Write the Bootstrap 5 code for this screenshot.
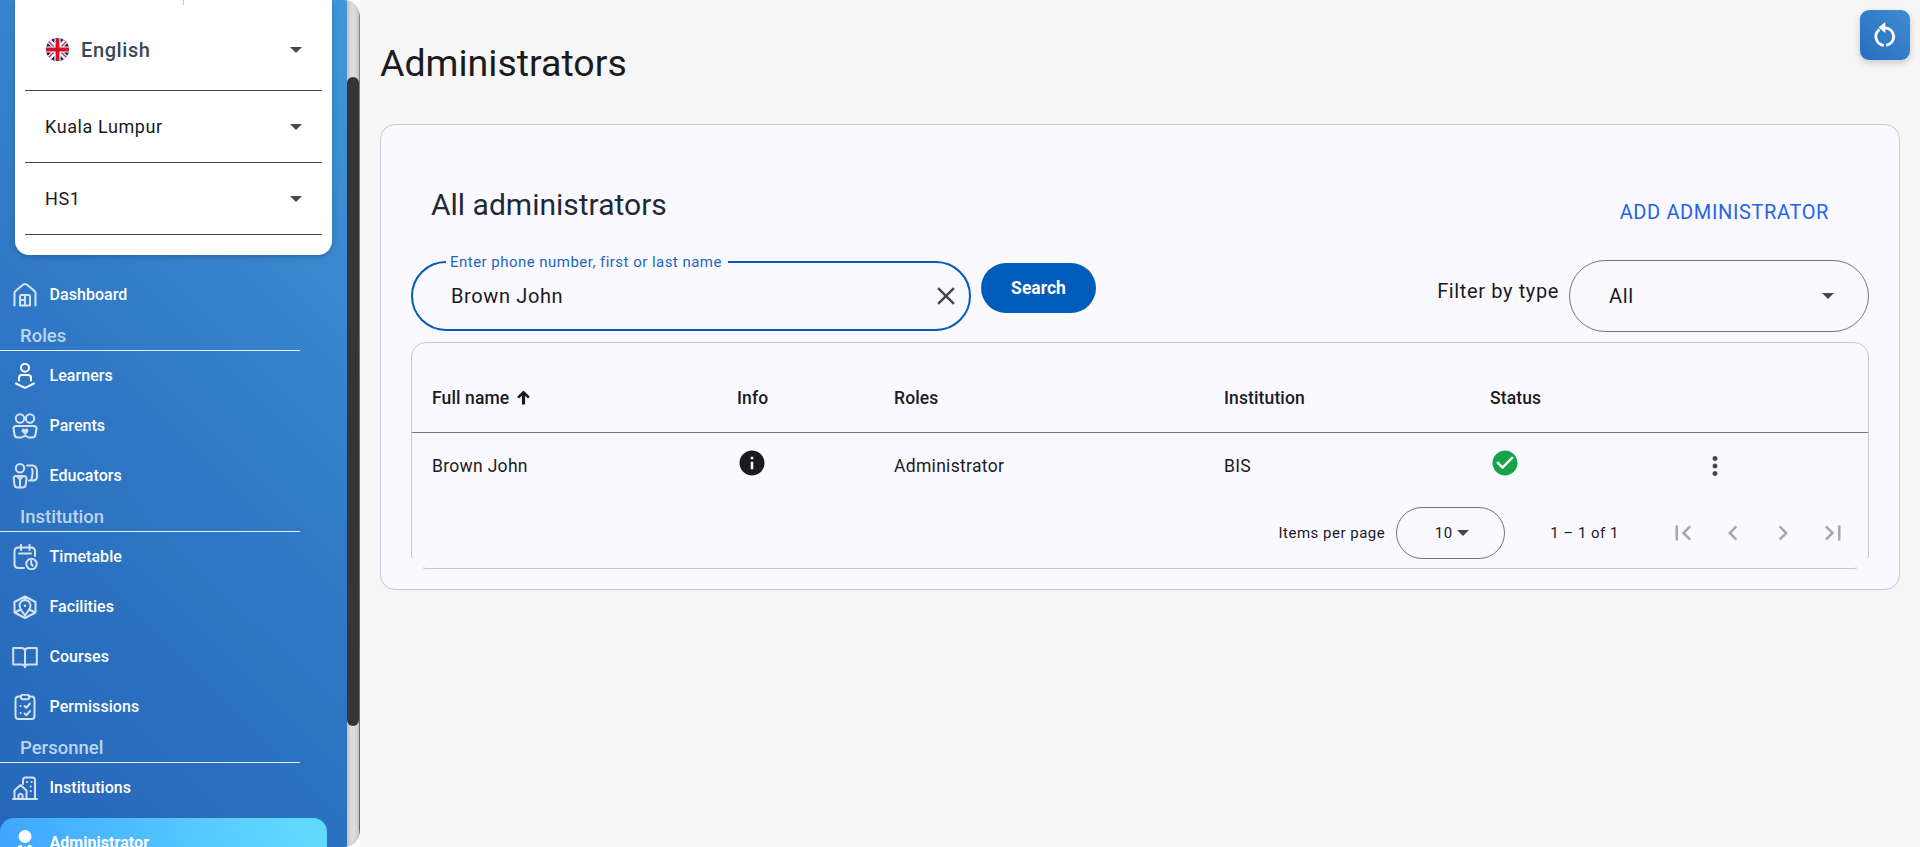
<!DOCTYPE html>
<html lang="en">
<head>
<meta charset="utf-8">
<meta name="viewport" content="width=device-width, initial-scale=1">
<title>Administrators</title>
<link rel="stylesheet" href="https://cdn.jsdelivr.net/npm/bootstrap@5.3.0/dist/css/bootstrap.min.css">
<style>
  body { font-family: Roboto, "Liberation Sans", sans-serif; background: #f6f6f6; color: #1a1b1f; height: 847px; line-height: 1.4; }
  svg { display: block; flex: none; }

  /* Sidebar */
  .side-wrap { width: 360px; height: 847px; background: #fdfbff; }
  .side { width: 360px; height: 847px; border-radius: 0 17px 17px 0; background: linear-gradient(45deg, #2566b8, #3079c7 50%, #4197d8); color: #fff; }
  .side-main { width: 347px; }
  .side-track { width: 12px; padding-top: 77px; background: linear-gradient(90deg, #c0c0c0, #dcdcdc 35%, #dcdcdc 65%, #c4c4c4); }
  .side-thumb { height: 649px; border-radius: 6px; background: #353535; }
  .picker { width: 317px; height: 255px; margin-left: 15px; padding: 0 10px; background: #fff; border-radius: 0 0 14px 14px; box-shadow: 0 2px 6px rgba(0,0,0,.2); color: #1a1b1f; }
  .picker-stub { width: 1px; height: 5px; margin-left: 158px; background: #c4c6d0; }
  .picker-row { height: 72px; padding: 0 20px; border-bottom: 1px solid #44474e; font-size: 18px; letter-spacing: .6px; }
  .picker-row.lang { height: 86px; padding: 4px 20px 0 21px; font-size: 20px; font-weight: 500; color: #3d4658; }
  .caret { width: 0; height: 0; border: 6.25px solid transparent; border-top-color: #44474e; border-bottom: 0; }
  .side-nav { padding-top: 15px; }
  .side-link { height: 50px; padding-left: 12px; gap: 11.5px; color: #fff; font-size: 16px; letter-spacing: .05px; font-weight: 500; text-decoration: none; }
  .side-link svg { width: 26px; height: 26px; fill: none; stroke: #fff; stroke-width: 2; stroke-linecap: round; stroke-linejoin: round; opacity: .8; }
  .side-link.current { width: 327px; margin-top: 5px; border-radius: 14px; background: linear-gradient(60deg, #3da3ff, #60d9ff 90%); font-weight: 700; }
  .side-link.current svg { opacity: 1; }
  .side-head { width: 300px; height: 31px; padding-left: 20px; border-bottom: 1px solid #e6eef8; font-size: 18.5px; font-weight: 500; line-height: 32px; color: #bcd5f0; }

  /* Page */
  .page { padding: 0 20px; }
  .page h1 { height: 124px; margin: 0; padding-top: 41px; font-size: 37.5px; font-weight: 400; }
  .refresh { top: 10px; right: 10px; width: 50px; height: 50px; padding: 0; border: 0; border-radius: 9px; background: linear-gradient(45deg, #2a6dbf, #3d8dd2); box-shadow: 0 3px 7px rgba(0,0,0,.18); }
  .panel { height: 466px; padding: 0 30px; background: #faf9ff; border: 1px solid #c4c6d0; border-radius: 15px; }
  .panel-head { height: 135px; padding: 43px 40px 0 20px; }
  .panel-head h2 { margin: 16px 0 0; font-size: 30px; font-weight: 400; color: #1f2937; line-height: 42px; }
  .add-link { margin-top: 30px; font-size: 20px; letter-spacing: .625px; line-height: 28px; color: #2563eb; text-decoration: none; }
  .tools { height: 82px; }
  .search-box { width: 560px; height: 70px; margin-top: 1px; padding: 0 8px 0 38px; border: 2px solid #005cbb; border-radius: 35px; font-size: 20px; letter-spacing: .625px; }
  .search-tag { top: -11px; left: 33px; width: 282px; padding-left: 4px; background: #faf9ff; color: #1c66bd; font-size: 15px; letter-spacing: .47px; line-height: 20px; white-space: nowrap; }
  .btn-find { width: 115px; height: 50px; margin: 3px 0 0 10px; border: 0; border-radius: 25px; background: #005cbb; color: #fff; font-size: 17.5px; font-weight: 700; }
  .filter-name { margin: 17px 10px 0 0; font-size: 20px; letter-spacing: .625px; }
  .filter-box { width: 300px; height: 72px; padding: 0 34px 1px 39px; border: 1px solid #74777f; border-radius: 36px; font-size: 20px; letter-spacing: .625px; }
  .grid-box { height: 227px; border: 1px solid #c4c6d0; border-radius: 15px; }
  .grid-box::before, .grid-box::after { content: ""; position: absolute; bottom: -1px; width: 12px; height: 11px; background: #faf9ff; }
  .grid-box::before { left: -1px; }
  .grid-box::after { right: -1px; }
  .people { table-layout: fixed; margin: 0; font-size: 17.5px; letter-spacing: .31px; --bs-table-bg: transparent; --bs-table-color: #1a1b1f; color: #1a1b1f; }
  .people > :not(caption) > * > * { padding: 0 0 0 20px; border: 0; vertical-align: middle; }
  .people th { height: 89px; padding-top: 21px !important; border-bottom: 1px solid #74777f !important; font-weight: 500; letter-spacing: .12px; }
  .people td { height: 67px; }
  .pager { height: 68px; padding-right: 10px; font-size: 15px; letter-spacing: .5px; }
  .pager-size { width: 109px; height: 52px; margin: 0 45px 0 11px; padding-left: 2px; border: 1px solid #74777f; border-radius: 26px; gap: 4px; }
  .pager-steps { margin-left: 39px; }
  .pager-step { width: 50px; color: #a7a7ad; }
</style>
</head>
<body class="d-flex overflow-hidden">

<div class="side-wrap flex-shrink-0">
<aside class="side d-flex overflow-hidden">
  <div class="side-main">
    <div class="picker">
      <div class="picker-stub"></div>
      <div class="picker-row lang d-flex align-items-center">
        <svg width="23" height="23" viewBox="0 0 24 24" class="me-2">
          <defs><clipPath id="disc"><circle cx="12" cy="12" r="12"/></clipPath></defs>
          <g clip-path="url(#disc)">
            <path fill="#012169" d="M0 0h24v24H0z"/>
            <path stroke="#fff" stroke-width="5" d="M0 0l24 24M24 0L0 24"/>
            <path stroke="#e0304a" stroke-width="1.7" d="M0 1l10 10M24 1L14 11M0 23l10-10M24 23L14 13"/>
            <path stroke="#fff" stroke-width="6.500" d="M12 0v24M0 12h24"/>
            <path stroke="#d0122d" stroke-width="4" d="M12 0v24M0 12h24"/>
          </g>
        </svg>
        <span class="me-auto ps-1">English</span><span class="caret"></span>
      </div>
      <div class="picker-row d-flex align-items-center justify-content-between">Kuala Lumpur<span class="caret"></span></div>
      <div class="picker-row d-flex align-items-center justify-content-between">HS1<span class="caret"></span></div>
    </div>

    <nav class="side-nav">
      <a class="side-link d-flex align-items-center" href="#"><svg viewBox="0 0 26 26"><path d="M2.500 23.500V11q0-1.200 1-2l7.500-6.200q2-1.500 4 0L22.500 9q1 .8 1 2v12.500M8 23.500V14.500q0-1.500 1.500-1.500h7q1.500 0 1.500 1.500v9zM13 13v10.500M8 18h5"/></svg>Dashboard</a>
      <div class="side-head">Roles</div>
      <a class="side-link d-flex align-items-center" href="#"><svg class="opacity-100" viewBox="0 0 26 26"><circle cx="13" cy="4.800" r="4"/><path d="M7 17.500V15q0-3 3-3h6q3 0 3 3v2.500M4 20.500l9 4.300 9-4.300"/></svg>Learners</a>
      <a class="side-link d-flex align-items-center" href="#"><svg viewBox="0 0 26 26"><circle cx="8" cy="5.500" r="4.200"/><circle cx="18" cy="5.500" r="4.200"/><path d="M4 13h18q2.500 0 2.500 2.500l-1 6q-.5 3-3.500 3h-3.500q-2-1.500-3.500-1.500t-3.500 1.500H6q-3 0-3.500-3l-1-6Q1.500 13 4 13z"/><path fill="#fff" stroke-width="1" d="M13 21.500l-2.800-3q-1-2 1-2.500 1.200-.1 1.800 1 .6-1.100 1.800-1 2 .5 1 2.500z"/></svg>Parents</a>
      <a class="side-link d-flex align-items-center" href="#"><svg viewBox="0 0 26 26"><circle cx="8" cy="5.200" r="4.200"/><path d="M4 13h8q2.500 0 2.500 2.500l-.8 6.500q-.5 2.500-3 2.500H5.500q-2.500 0-3-2.500l-.8-6.500Q1.500 13 4 13zM5 13l3 3.500 3-3.500M8 16.500v8M15 2.500h6q4 1 4 6v5.500q-.5 3.500-4 3.500h-4M20 6q1 2 .5 5l-1 5.500"/></svg>Educators</a>
      <div class="side-head">Institution</div>
      <a class="side-link d-flex align-items-center" href="#"><svg viewBox="0 0 26 26"><path d="M12 24H6.500Q2.500 24 2.500 20V7.500q0-4 4-4h12.500q4 0 4 4V12M9 .800V6M17.500.800V6M7 9.500h12"/><circle cx="19.500" cy="20" r="5.200"/><path d="M19.200 17v3.200l1.500 1.500"/></svg>Timetable</a>
      <a class="side-link d-flex align-items-center" href="#"><svg viewBox="0 0 26 26"><path d="M13 2.500L23.500 8v10.500L13 24 2.500 18.500V8zM13 21.500l-3.500-5q-2-3-2-5Q8 6.500 13 6q5 .5 5.500 5.500 0 2-2 5zM2.500 18.500L9 15.500M23.500 18.500L17 15.500M13 2.500V6"/><circle cx="13" cy="11.800" r="1.300" fill="#fff" stroke="none"/></svg>Facilities</a>
      <a class="side-link d-flex align-items-center" href="#"><svg viewBox="0 0 26 26"><path d="M13 7.500Q13 4 9.500 4H1.200v16.500H10q3 0 3 2.800 0-2.800 3-2.800h8.800V4h-8.300Q13 4 13 7.500zV23"/></svg>Courses</a>
      <a class="side-link d-flex align-items-center" href="#"><svg viewBox="0 0 26 26"><path d="M9 2.500H6.500q-3 0-3 3V22q0 3 3 3h13q3 0 3-3V5.500q0-3-3-3H17"/><rect x="8.800" y=".8" width="8.500" height="4.500" rx="2.200"/><path d="M12.500 12l1.800 1.800L18 9.500M12.500 19.500l1.800 1.800L18 17M8.500 12h.1M8.500 19h.1"/></svg>Permissions</a>
      <div class="side-head">Personnel</div>
      <a class="side-link d-flex align-items-center" href="#"><svg viewBox="0 0 26 26"><path d="M1 24h24M2.500 24V15.500L8.500 10l6 5.500V24M6.500 24v-4q2-2.500 4 0v4M11 9V5q0-2.500 2.500-2.500h7Q23 2.500 23 5v19"/><path stroke-width="2" stroke-dasharray=".1 4.500" d="M15 7h5M18.700 11.500v9"/></svg>Institutions</a>
      <a class="side-link current d-flex align-items-center" href="#"><svg viewBox="0 0 26 26"><path fill="#fff" stroke="none" d="M13 0a6.300 6.300 0 0 1 0 13A6.300 6.300 0 0 1 13 0zM5 26v-7q0-3.500 4.500-4.500L12 20l.5-4h1l.5 4 2.500-5.500Q21 15.500 21 19v7z"/></svg>Administrator</a>
    </nav>
  </div>
  <div class="side-track"><div class="side-thumb"></div></div>
</aside>
</div>

<main class="page position-relative flex-grow-1">
  <h1>Administrators</h1>
  <button class="refresh position-absolute d-flex align-items-center justify-content-center" type="button" aria-label="Refresh">
    <svg width="24" height="26" viewBox="0 0 24 26" fill="none" stroke="#fff" stroke-width="2.800"><path d="M6.400 7.500A8.800 8.800 0 0 0 10.800 23.300M13.200 23.300A8.800 8.800 0 0 0 12 5.800"/><path fill="#fff" stroke="none" d="M12.300 0v11L5.500 5.500z"/></svg>
  </button>

  <section class="panel">
    <div class="panel-head d-flex justify-content-between align-items-start">
      <h2>All administrators</h2>
      <a class="add-link" href="#">ADD ADMINISTRATOR</a>
    </div>

    <div class="tools d-flex align-items-start">
      <div class="search-box position-relative d-flex align-items-center justify-content-between">
        <span class="search-tag position-absolute">Enter phone number, first or last name</span>
        <span>Brown John</span>
        <svg width="30" height="30" viewBox="0 0 24 24" fill="#44474e"><path d="M19 6.410L17.590 5 12 10.590 6.410 5 5 6.410 10.590 12 5 17.590 6.410 19 12 13.410 17.590 19 19 17.590 13.410 12z"/></svg>
      </div>
      <button class="btn btn-find" type="button">Search</button>
      <span class="filter-name ms-auto">Filter by type</span>
      <div class="filter-box d-flex align-items-center justify-content-between">All<span class="caret"></span></div>
    </div>

    <div class="grid-box position-relative">
      <table class="table people">
        <colgroup><col style="width:305px"><col style="width:157px"><col style="width:330px"><col style="width:266px"><col style="width:210px"><col></colgroup>
        <thead>
          <tr>
            <th><span class="d-flex align-items-center">Full name<svg class="ms-2" width="13" height="15" viewBox="0 0 14 15" fill="#1a1b1f"><path d="M7 0l6.800 6.600-2 2-3.100-3V15H5.300V5.600l-3.100 3-2-2z"/></svg></span></th>
            <th>Info</th><th>Roles</th><th>Institution</th><th>Status</th><th></th>
          </tr>
        </thead>
        <tbody>
          <tr>
            <td>Brown John</td>
            <td><svg width="30" height="30" viewBox="0 0 24 24" fill="#1a1b1f" style="margin-top:-6px"><path d="M12 2C6.480 2 2 6.480 2 12s4.480 10 10 10 10-4.480 10-10S17.520 2 12 2zm1 15h-2v-6h2v6zm0-8h-2V7h2v2z"/></svg></td>
            <td>Administrator</td>
            <td>BIS</td>
            <td><svg width="30" height="30" viewBox="0 0 24 24" fill="#16a34a" style="margin-top:-6px"><path d="M12 2C6.480 2 2 6.480 2 12s4.480 10 10 10 10-4.480 10-10S17.520 2 12 2zm-2 15l-5-5 1.410-1.410L10 14.170l7.590-7.590L19 8l-9 9z"/></svg></td>
            <td><svg width="30" height="30" viewBox="0 0 24 24" fill="#44474e"><path d="M12 8c1.100 0 2-.9 2-2s-.9-2-2-2-2 .9-2 2 .9 2 2 2zm0 2c-1.100 0-2 .9-2 2s.9 2 2 2 2-.9 2-2-.9-2-2-2zm0 6c-1.100 0-2 .9-2 2s.9 2 2 2 2-.9 2-2-.9-2-2-2z"/></svg></td>
          </tr>
        </tbody>
      </table>
      <div class="pager d-flex align-items-center justify-content-end">
        <span>Items per page</span>
        <div class="pager-size d-flex align-items-center justify-content-center">10<span class="caret"></span></div>
        <span>1 – 1 of 1</span>
        <div class="pager-steps d-flex">
          <span class="pager-step d-flex justify-content-center"><svg width="30" height="30" viewBox="0 0 24 24" fill="currentColor"><path d="M18.410 16.590L13.820 12l4.590-4.590L17 6l-6 6 6 6zM6 6h2v12H6z"/></svg></span>
          <span class="pager-step d-flex justify-content-center"><svg width="30" height="30" viewBox="0 0 24 24" fill="currentColor"><path d="M15.410 7.410L14 6l-6 6 6 6 1.410-1.410L10.830 12z"/></svg></span>
          <span class="pager-step d-flex justify-content-center"><svg width="30" height="30" viewBox="0 0 24 24" fill="currentColor"><path d="M10 6L8.590 7.410 13.170 12l-4.580 4.590L10 18l6-6z"/></svg></span>
          <span class="pager-step d-flex justify-content-center"><svg width="30" height="30" viewBox="0 0 24 24" fill="currentColor"><path d="M5.590 7.410L10.180 12l-4.590 4.590L7 18l6-6-6-6zM16 6h2v12h-2z"/></svg></span>
        </div>
      </div>
    </div>
  </section>
</main>

<script src="https://cdn.jsdelivr.net/npm/bootstrap@5.3.0/dist/js/bootstrap.bundle.min.js"></script>
</body>
</html>
